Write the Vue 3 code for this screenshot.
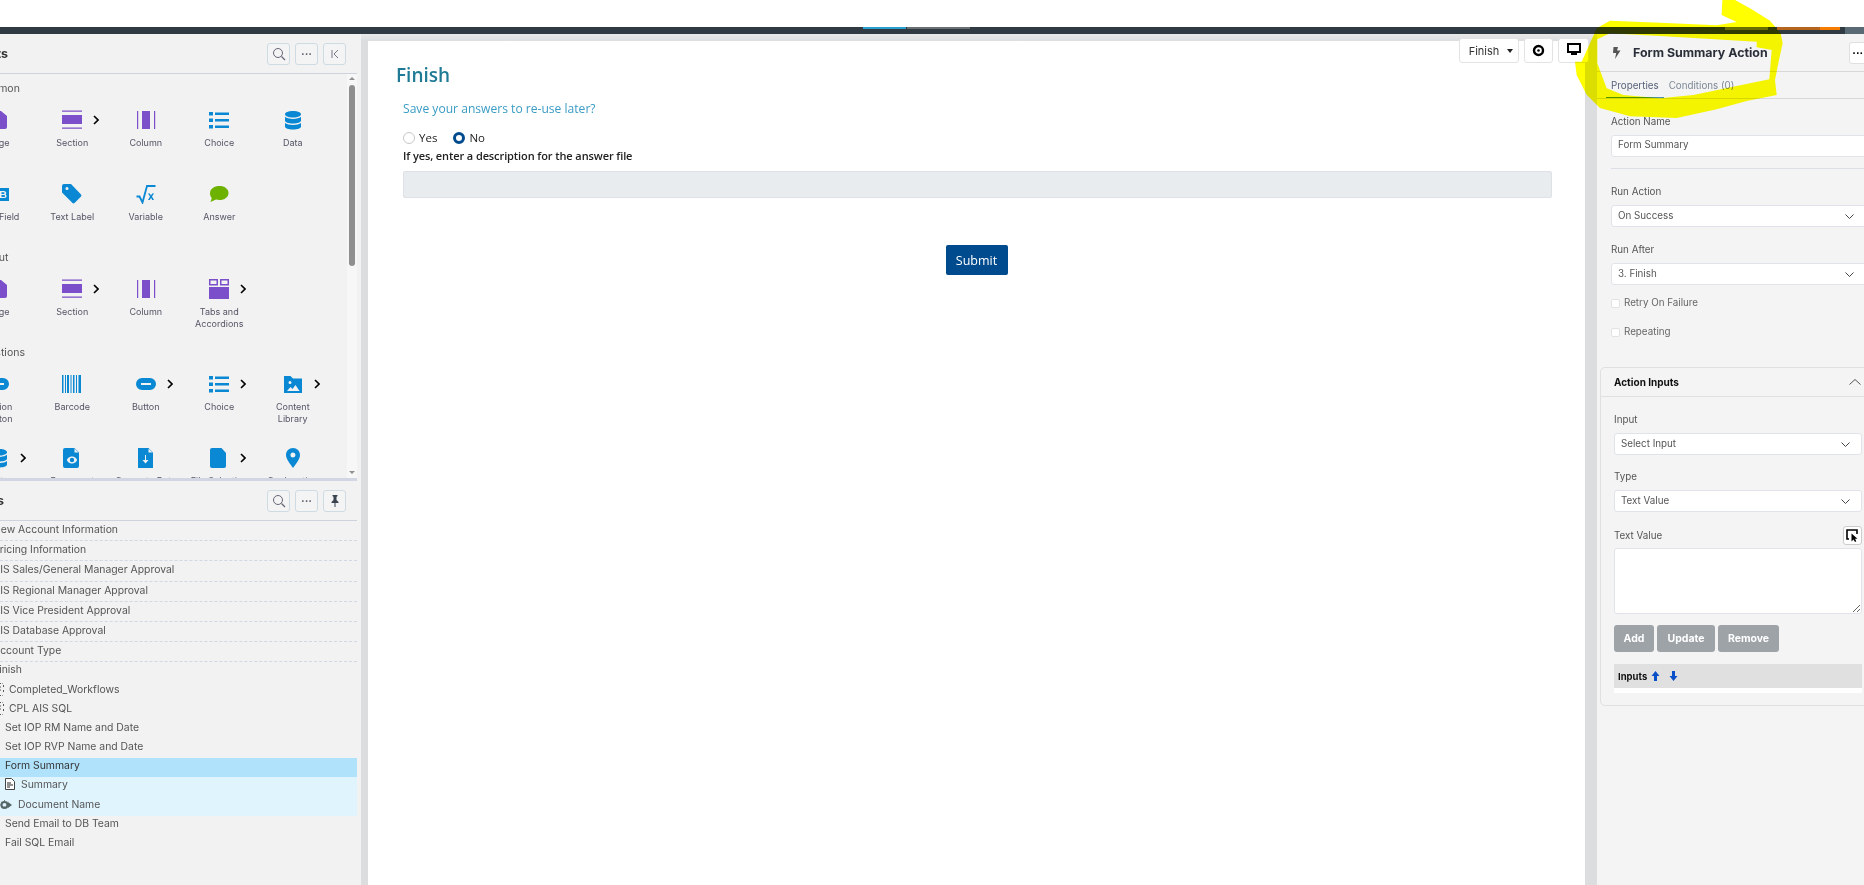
<template>
  <div class="page">
    <div class="top-white"></div>
    <div class="dark-bar">
      <span class="bar-tab bar-blue"></span>
      <span class="bar-tab bar-grey"></span>
      <span class="bar-tab bar-c"></span>
      <span class="bar-tab bar-orange"></span>
      <span class="bar-tab bar-hot"></span>
      <span class="bar-end"></span>
    </div>

    <div class="work">
      <aside class="left">
        <section class="palette">
          <header class="panel-head">
            <span class="panel-title top-title">Elements</span>
            <div class="head-btns">
              <button class="tool">
                <svg width="14" height="14" viewBox="0 0 14 14"><circle cx="6" cy="6" r="4.500" fill="none" stroke="#667" stroke-width="1"/><path d="M9.500 9.500 13 13" stroke="#667" stroke-width="1.200"/></svg>
              </button>
              <button class="tool dots">···</button>
              <button class="tool">
                <svg width="10" height="10" viewBox="0 0 10 10"><path d="M2 1v8M8 1 4 5l4 4" fill="none" stroke="#778" stroke-width="1"/></svg>
              </button>
            </div>
          </header>
          <div class="palette-body">
            <div class="palette-scroll">
              <div v-for="group in groups" :key="group.name" class="group">
                <div class="group-name">{{ group.name }}</div>
                <div class="grid">
                  <div v-for="item in group.items" :key="item.label" class="item">
                    <svg class="item-icon" viewBox="0 0 20 20" :class="item.color">
                      <path v-if="icons[item.icon].d" :d="icons[item.icon].d" fill-rule="evenodd" />
                      <path v-if="icons[item.icon].s" :d="icons[item.icon].s" class="line" />
                    </svg>
                    <svg v-if="item.more" class="more" width="6" height="10" viewBox="0 0 6 10"><path d="M1 1l4 4-4 4" fill="none" stroke="#000" stroke-width="1.600"/></svg>
                    <div class="item-label" :class="{ single: item.single }">{{ item.label }}</div>
                  </div>
                </div>
              </div>
            </div>
            <div class="scrollbar">
              <i class="arrow up"></i>
              <i class="thumb"></i>
              <i class="arrow down"></i>
            </div>
          </div>
        </section>

        <section class="tree-panel">
          <header class="panel-head">
            <span class="panel-title">Actions</span>
            <div class="head-btns">
              <button class="tool">
                <svg width="14" height="14" viewBox="0 0 14 14"><circle cx="6" cy="6" r="4.500" fill="none" stroke="#667" stroke-width="1"/><path d="M9.500 9.500 13 13" stroke="#667" stroke-width="1.200"/></svg>
              </button>
              <button class="tool dots">···</button>
              <button class="tool">
                <svg width="10" height="12" viewBox="0 0 10 12"><path d="M2.500 0h5v1l-1 1v3l2 2v1H5.500v4h-1V8H1.500V7l2-2V2l-1-1z" fill="#3a4350"/></svg>
              </button>
            </div>
          </header>
          <div class="tree">
            <div v-for="row in pages" :key="row.text" class="page-row" :class="{ tall: row.tall }">{{ row.text }}</div>
            <div class="page-last">Finish</div>
            <div v-for="row in actions" :key="row.text" class="act-row" :class="row.cls">
              <svg v-if="row.icon === 'sql'" width="8" height="13" viewBox="0 0 8 13"><path d="M0 .5h6.500M7.500 2v3M7.500 7v3M0 12.500h6.500M3 4h3M3 7h3" fill="none" stroke="#555" stroke-width="1" stroke-dasharray="2 1"/></svg>
              <svg v-if="row.icon === 'doc'" width="10" height="12" viewBox="0 0 10 12"><path d="M.5.5h6l3 3v8h-9z" fill="#fff" stroke="#444"/><path d="M2 5h4M2 7h6M2 9h3" stroke="#222"/></svg>
              <svg v-if="row.icon === 'gear'" class="gear" width="12" height="10" viewBox="0 0 12 10"><circle cx="4.500" cy="5" r="3" fill="none" stroke="#566" stroke-width="2"/><path d="M4.500 0v10M0 5h9M1.300 1.800l6.400 6.400M7.700 1.800 1.300 8.200" stroke="#566" stroke-width=".8" stroke-dasharray="1.300 5"/><path d="M8 2l4 3-4 3z" fill="#566"/></svg>
              <span>{{ row.text }}</span>
            </div>
          </div>
        </section>
      </aside>

      <main class="center">
        <div class="sheet">
          <h1>Finish</h1>
          <div class="form">
            <p class="question">Save your answers to re-use later?</p>
            <div class="radios">
              <label><i class="radio"></i>Yes</label>
              <label><i class="radio on"></i>No</label>
            </div>
            <div class="strong-label">If yes, enter a description for the answer file</div>
            <div class="disabled-input"></div>
            <div class="submit-row"><button class="submit">Submit</button></div>
          </div>
        </div>
        <div class="toolbar">
          <button class="pick">Finish<i class="caret"></i></button>
          <button class="tb-btn">
            <svg width="13" height="13" viewBox="0 0 13 13"><circle cx="6.500" cy="6.500" r="4.500" fill="none" stroke="#000" stroke-width="2.400"/><circle cx="6.500" cy="6.500" r="1.300" fill="#000"/></svg>
          </button>
          <button class="tb-btn wide">
            <svg width="14" height="13" viewBox="0 0 14 13"><path d="M1 1h12v8H1z" fill="#fff" stroke="#000" stroke-width="2"/><path d="M4 10h6v2H4z" fill="#000"/></svg>
          </button>
        </div>
      </main>

      <aside class="right">
        <header class="right-head">
          <svg width="9" height="12" viewBox="0 0 9 12"><path d="M1.500 0H6L5 3.500h3.500L3 12l1.200-6H1z" fill="#555"/></svg>
          <span class="right-title">Form Summary Action</span>
          <button class="right-more">···</button>
        </header>
        <nav class="tabs">
          <span class="tab active">Properties</span>
          <span class="tab">Conditions (0)</span>
        </nav>
        <div class="props">
          <div class="lbl">Action Name</div>
          <div class="inp mid">Form Summary</div>
          <div class="rule"></div>
          <div class="lbl">Run Action</div>
          <div class="inp sel">On Success<svg width="9" height="5" viewBox="0 0 9 5"><path d="M.5.500 4.500 4.500l4-4" fill="none" stroke="#444"/></svg></div>
          <div class="lbl">Run After</div>
          <div class="inp sel">3. Finish<svg width="9" height="5" viewBox="0 0 9 5"><path d="M.5.500 4.500 4.500l4-4" fill="none" stroke="#444"/></svg></div>
          <label class="check"><i></i>Retry On Failure</label>
          <label class="check second"><i></i>Repeating</label>

          <div class="card">
            <div class="card-head">
              <span>Action Inputs</span>
              <svg width="12" height="6" viewBox="0 0 12 6"><path d="M.5 5.500 6 .5l5.500 5" fill="none" stroke="#555"/></svg>
            </div>
            <div class="card-body">
              <div class="lbl">Input</div>
              <div class="inp sel in-card">Select Input<svg width="9" height="5" viewBox="0 0 9 5"><path d="M.5.500 4.500 4.500l4-4" fill="none" stroke="#444"/></svg></div>
              <div class="lbl">Type</div>
              <div class="inp sel in-card">Text Value<svg width="9" height="5" viewBox="0 0 9 5"><path d="M.5.500 4.500 4.500l4-4" fill="none" stroke="#444"/></svg></div>
              <div class="text-head">
                <span>Text Value</span>
                <button class="pointer-btn">
                  <svg width="13" height="13" viewBox="0 0 13 13"><path d="M3 10H1V1h10v4" fill="none" stroke="#000" stroke-width="1.600"/><path d="M5.500 4.500v8l2-2 1.500 2.500 1.300-.8-1.300-2.500h2.500z" fill="#000"/></svg>
                </button>
              </div>
              <div class="textarea">
                <svg class="grip" width="8" height="8" viewBox="0 0 8 8"><path d="M1 8l7-7M5 8l3-3" stroke="#666"/></svg>
              </div>
              <div class="btns">
                <button>Add</button>
                <button>Update</button>
                <button>Remove</button>
              </div>
              <div class="inputs-bar">
                <span>Inputs</span>
                <svg width="9" height="12" viewBox="0 0 9 12"><path d="M4.500 1 8.500 6H6v5H3V6H.5z" fill="#0a50c8"/></svg>
                <svg width="9" height="12" viewBox="0 0 9 12"><path d="M4.500 11 8.500 6H6V1H3v5H.5z" fill="#0a50c8"/></svg>
              </div>
              <div class="inputs-list"></div>
            </div>
          </div>
        </div>
      </aside>
    </div>

    <svg class="marker" width="304" height="120" viewBox="0 0 912 360">
      <path fill-rule="evenodd" d="M487 0H525L575 28 630 62 662 100 668 130 655 190 645 240 650 285 560 303 470 328 350 354 210 349 120 324 80 284 50 225 45 185H65L110 85 150 62 300 68 470 76 530 66 485 45ZM112 118 112 190 140 265 190 285 300 295 400 285 530 258 628 238 635 150 590 142 590 125 300 108 150 100Z" />
    </svg>
  </div>
</template>

<script setup>
const icons = {
  page: { d: 'M1 1h11l6 5v11a2 2 0 0 1-2 2H1z' },
  section: { d: 'M0 .5h20v1.200H0zM0 5h20v9H0zM0 17.500h20v1.200H0z' },
  column: { d: 'M1 1h1.200v18H1zM6 1h8v18H6zM18 1h1.200v18H18z' },
  tabs: { d: 'M0 0h9v6.500H0zM1.500 1.500v3.500h6V1.500zM11 0h9v6.500h-9zM12.500 1.500v3.500h6V1.500zM0 8h20v12H0z' },
  choice: { d: 'M0 2h4v3.500H0zM6 2.500h14V5H6zM0 8.500h4V12H0zM6 9h14v2.500H6zM0 15h4v3.500H0zM6 15.500h14V18H6z' },
  data: { d: 'M10 1c4.500 0 8 1.300 8 3.200S14.500 7.500 10 7.500 2 6.100 2 4.200 5.500 1 10 1zM2 6.800c1.500 1.300 4.500 2.100 8 2.100s6.500-.8 8-2.100v3.700c0 1.800-3.500 3-8 3s-8-1.200-8-3zM2 13c1.500 1.300 4.500 2 8 2s6.500-.7 8-2v3.500c0 1.800-3.500 3-8 3s-8-1.200-8-3z' },
  field: { d: 'M1 4h19v13H1zM11 7v7h4c2 0 2.500-1 2.500-2 0-.8-.4-1.400-1-1.600.5-.3.700-.8.700-1.400 0-1-.7-2-2.200-2zM12.500 8.200h2c.8 0 1.100.4 1.100.9s-.3.900-1.100.9h-2zM12.500 11h2.200c.9 0 1.300.4 1.300 1s-.4 1-1.300 1h-2.200z' },
  tag: { d: 'M2 0h7l10 10.500a1.500 1.500 0 0 1 0 2l-6.500 6.500a1.500 1.500 0 0 1-2 0L1 9.500C.3 9 0 8.500 0 7.500V2a2 2 0 0 1 2-2zM5 3a1.500 1.500 0 1 0 0 3 1.500 1.500 0 0 0 0-3z' },
  variable: { d: 'M12 9.500h1.800l1.200 2 1.200-2H18l-2 3 2 3.500h-1.800L15 13.800 13.800 16H12l2-3.500z', s: 'M.5 12.500h3l3 6L11 2h8.500' },
  answer: { d: 'M10.500 2c5 0 9 2.700 9 7s-4 7-9 7c-1.300 0-2.500-.2-3.500-.5L1.500 18l1.300-4C1.500 12.800 1 11 1 9c0-4.300 4.500-7 9.500-7z' },
  pill: { d: 'M6 4h8a6 6 0 0 1 0 12H6A6 6 0 0 1 6 4zM5 9v2h10V9z' },
  barcode: { d: 'M0 1h1.500v18H0zM3 1h1v18H3zM5 1h2v18H5zM8.500 1h1v18h-1zM11 1h1.500v18H11zM14 1h1v18h-1zM16.500 1H19v18h-2.500z' },
  library: { d: 'M1 2h6.500L10 4.500h9V19H1zM7 7a1.500 1.500 0 1 0 0 3 1.500 1.500 0 0 0 0-3zM4 17h12.500l-4-6-3 4-2-2z' },
  docEye: { d: 'M3 0h9l5 5v13a2 2 0 0 1-2 2H3a2 2 0 0 1-2-2V2a2 2 0 0 1 2-2zM10 8.500c-3 0-5 2.500-5 3.500s2 3.500 5 3.500 5-2.500 5-3.500-2-3.500-5-3.500zM10 9.800a2.200 2.200 0 1 1 0 4.400 2.200 2.200 0 0 1 0-4.400zM12.500 0v4.500H17z' },
  docDown: { d: 'M2 0h10l5 5v15H2zM9 7v5H6.500l3 3.500 3-3.500H10V7zM12.500 0v4.500H17z' },
  file: { d: 'M3 0h9.500l4.500 5v13a2 2 0 0 1-2 2H3a2 2 0 0 1-2-2V2a2 2 0 0 1 2-2z' },
  pin: { d: 'M10 0c4 0 7 3 7 7 0 4.500-5 10-7 13-2-3-7-8.500-7-13 0-4 3-7 7-7zM10 4.500a2.500 2.500 0 1 0 0 5 2.500 2.500 0 0 0 0-5z' }
}

const groups = [
  {
    name: 'Common',
    items: [
      { label: 'Page', icon: 'page', color: 'purple' },
      { label: 'Section', icon: 'section', color: 'purple', more: true },
      { label: 'Column', icon: 'column', color: 'purple' },
      { label: 'Choice', icon: 'choice', color: 'blue' },
      { label: 'Data', icon: 'data', color: 'blue' },
      { label: 'Text Field', icon: 'field', color: 'blue' },
      { label: 'Text Label', icon: 'tag', color: 'blue' },
      { label: 'Variable', icon: 'variable', color: 'blue' },
      { label: 'Answer', icon: 'answer', color: 'green' }
    ]
  },
  {
    name: 'Layout',
    items: [
      { label: 'Page', icon: 'page', color: 'purple' },
      { label: 'Section', icon: 'section', color: 'purple', more: true },
      { label: 'Column', icon: 'column', color: 'purple' },
      { label: 'Tabs and Accordions', icon: 'tabs', color: 'purple', more: true }
    ]
  },
  {
    name: 'Questions',
    items: [
      { label: 'Action Button', icon: 'pill', color: 'blue' },
      { label: 'Barcode', icon: 'barcode', color: 'blue' },
      { label: 'Button', icon: 'pill', color: 'blue', more: true },
      { label: 'Choice', icon: 'choice', color: 'blue', more: true },
      { label: 'Content Library', icon: 'library', color: 'blue', more: true },
      { label: 'Data', icon: 'data', color: 'blue', more: true },
      { label: 'Document', icon: 'docEye', color: 'blue', single: true },
      { label: 'Generate Data', icon: 'docDown', color: 'blue', single: true },
      { label: 'File Selection', icon: 'file', color: 'blue', more: true, single: true },
      { label: 'Geolocation', icon: 'pin', color: 'blue', single: true }
    ]
  }
]

const pages = [
  { text: 'New Account Information' },
  { text: 'Pricing Information' },
  { text: 'AIS Sales/General Manager Approval', tall: true },
  { text: 'AIS Regional Manager Approval' },
  { text: 'AIS Vice President Approval' },
  { text: 'AIS Database Approval' },
  { text: 'Account Type' }
]

const actions = [
  { text: 'Completed_Workflows', icon: 'sql', cls: 'with-sql' },
  { text: 'CPL AIS SQL', icon: 'sql', cls: 'with-sql' },
  { text: 'Set IOP RM Name and Date' },
  { text: 'Set IOP RVP Name and Date' },
  { text: 'Form Summary', cls: 'selected' },
  { text: 'Summary', icon: 'doc', cls: 'child' },
  { text: 'Document Name', icon: 'gear', cls: 'child gear-row' },
  { text: 'Send Email to DB Team' },
  { text: 'Fail SQL Email' }
]
</script>

<style>
html,
body {
  margin: 0;
  background: #fff;
}
</style>

<style scoped>
.page {
  position: relative;
  width: 1864px;
  height: 885px;
  overflow: hidden;
  font-family: Inter, "Noto Sans", sans-serif;
  font-size: 10.5px;
  color: #444;
  background: #fff;
}

.top-white {
  height: 27px;
}

.dark-bar {
  display: flex;
  align-items: flex-start;
  height: 7px;
  background: #2f3a42;
}

.bar-tab {
  display: block;
  height: 2px;
}

.bar-blue {
  width: 43px;
  margin-left: 863px;
  background: #2a9fd0;
}

.bar-grey {
  width: 63px;
  margin-left: 1px;
  background: #6a6f72;
}

.bar-c {
  width: 43px;
  height: 3px;
  margin-left: 755px;
  background: #6a6f72;
}

.bar-orange {
  width: 43px;
  height: 3px;
  margin-left: 9px;
  background: #b5651d;
}

.bar-hot {
  width: 20px;
  height: 3px;
  background: #f57c00;
}

.bar-end {
  width: 19px;
  height: 7px;
  margin-left: 5px;
  background: #5a6a75;
}

.work {
  display: flex;
  height: 851px;
}

/* left column */
.left {
  flex: 0 0 361px;
  width: 361px;
  background: #f2f2f2;
  overflow: hidden;
}

.palette,
.tree-panel {
  width: 357px;
}

.panel-head {
  display: flex;
  align-items: center;
  justify-content: space-between;
  box-sizing: border-box;
  height: 40px;
  padding-right: 11px;
  border-bottom: 1px solid #ccd3dc;
}

.panel-title {
  display: block;
  width: 58px;
  margin-left: -54px;
  font-size: 12.500px;
  font-weight: 700;
  color: #333;
  text-align: right;
}

.top-title {
  margin-left: -50px;
}

.head-btns {
  display: flex;
  gap: 5px;
}

.tool {
  display: flex;
  align-items: center;
  justify-content: center;
  box-sizing: border-box;
  width: 23px;
  height: 22px;
  padding: 0;
  border: 1px solid #cfdbe3;
  border-radius: 3px;
  background: #f4f4f4;
  color: #556;
  font-size: 11px;
  font-weight: 700;
  font-family: inherit;
}

.palette-body {
  display: flex;
  height: 404px;
  border-bottom: 3px solid #d2d6e2;
}

.palette-scroll {
  flex: 1;
  padding-top: 6px;
  overflow: hidden;
}

.group {
  margin-bottom: 1px;
}

.group-name {
  margin-left: -25px;
  font-size: 10.500px;
  line-height: 18px;
  color: #555;
}

.grid {
  display: grid;
  grid-template-columns: repeat(5, 73.5px);
  grid-auto-rows: 64px;
  row-gap: 10px;
  margin-top: 12px;
  margin-left: -38px;
}

.item {
  position: relative;
  text-align: center;
}

.item-icon {
  display: block;
  width: 20px;
  height: 20px;
  margin: 0 auto;
}

.purple {
  fill: #7a4fc9;
  --c: #7a4fc9;
}

.blue {
  fill: #0a88d4;
  --c: #0a88d4;
}

.green {
  fill: #6db200;
  --c: #6db200;
}

.line {
  fill: none;
  stroke: var(--c);
  stroke-width: 1.800;
}

.more {
  position: absolute;
  top: 5px;
  left: calc(50% + 21px);
}

.item-label {
  width: 52px;
  margin: 7px auto 0;
  font-size: 9px;
  line-height: 12px;
  color: #556;
}

.item-label.single {
  width: 73px;
  white-space: nowrap;
}

.scrollbar {
  display: flex;
  flex: 0 0 10px;
  flex-direction: column;
  align-items: center;
  padding-top: 3px;
  background: #f7f7f7;
}

.thumb {
  display: block;
  width: 6px;
  height: 181px;
  margin-top: 5px;
  border-radius: 3px;
  background: #8f8f8f;
}

.arrow {
  display: block;
  width: 0;
  height: 0;
  border-left: 3px solid transparent;
  border-right: 3px solid transparent;
}

.arrow.up {
  border-bottom: 3px solid #8f8f8f;
}

.arrow.down {
  margin-top: auto;
  margin-bottom: 4px;
  border-top: 3px solid #8f8f8f;
}

.tree {
  width: 367px;
  margin-left: -10px;
  font-size: 10.400px;
  color: #555;
}

.page-row {
  box-sizing: border-box;
  height: 20px;
  padding-left: 3px;
  line-height: 17px;
  border-bottom: 1px dashed #cfd8e3;
}

.page-row.tall {
  height: 21px;
}

.page-last {
  padding-left: 3px;
  height: 19px;
  line-height: 13px;
  margin-top: 1px;
}

.act-row {
  display: flex;
  align-items: flex-start;
  gap: 6px;
  height: 19px;
  padding-left: 15px;
  line-height: 15px;
}

.act-row svg {
  flex: none;
  margin-top: 1px;
}

.act-row .gear {
  margin-top: 4px;
}

.with-sql {
  gap: 5px;
  padding-left: 6px;
}

.selected {
  background: #b1e2fb;
  color: #333;
}

.child {
  background: #e0f4fe;
}

.gear-row {
  height: 20px;
  padding-left: 10px;
  line-height: 17px;
}

/* middle */
.center {
  position: relative;
  flex: 0 0 1236px;
  box-sizing: border-box;
  width: 1236px;
  padding: 7px 12px 0 7px;
  background: linear-gradient(#e9e9e9, #dcdddf 7px);
  background-color: #dfe0e2;
}

.sheet {
  box-sizing: border-box;
  height: 100%;
  padding: 22px 33px 0 28px;
  background: #fff;
  font-family: "Open Sans", "Noto Sans", sans-serif;
  color: #222;
}

h1 {
  margin: 0;
  font-size: 19px;
  font-weight: 600;
  line-height: 24px;
  color: #1f7a96;
}

.form {
  padding-left: 7px;
}

.question {
  margin: 13px 0 0;
  font-size: 12.100px;
  line-height: 18px;
  color: #3a9cc4;
}

.radios {
  display: flex;
  gap: 16px;
  margin-top: 12px;
  font-size: 11.500px;
  line-height: 16px;
}

.radios label {
  display: flex;
  align-items: center;
  gap: 4px;
}

.radio {
  display: block;
  box-sizing: border-box;
  width: 12px;
  height: 12px;
  border: 1px solid #c8c8c8;
  border-radius: 50%;
  background: #fff;
}

.radio.on {
  border: 3.500px solid #004b8d;
}

.strong-label {
  margin-top: 2px;
  font-size: 11px;
  font-weight: 600;
  letter-spacing: -0.1px;
  line-height: 16px;
}

.disabled-input {
  box-sizing: border-box;
  height: 27px;
  margin-top: 7px;
  border: 1px solid #dee2e6;
  border-radius: 2px;
  background: #e9ecef;
}

.submit-row {
  display: flex;
  justify-content: center;
  margin-top: 47px;
}

.submit {
  width: 62px;
  height: 30px;
  margin-right: 2px;
  padding: 0;
  border: 0;
  border-radius: 2px;
  background: #004b8d;
  color: #fff;
  font-family: inherit;
  font-size: 12.500px;
}

.toolbar {
  position: absolute;
  top: 4px;
  left: 1098px;
  display: flex;
  gap: 5px;
}

.toolbar button {
  display: flex;
  align-items: center;
  justify-content: center;
  box-sizing: border-box;
  height: 25px;
  padding: 0;
  border: 1px solid #e3e3e3;
  border-radius: 3px;
  background: #fff;
  font-family: Inter, sans-serif;
}

.toolbar .pick {
  width: 60px;
  padding-left: 4px;
  gap: 8px;
  font-size: 11px;
  color: #333;
}

.caret {
  display: block;
  border-left: 3px solid transparent;
  border-right: 3px solid transparent;
  border-top: 4px solid #222;
}

.tb-btn {
  width: 29px;
}

.toolbar .tb-btn.wide {
  width: 31px;
  padding-bottom: 3px;
}

/* right panel */
.right {
  flex: 1;
  min-width: 0;
  background: #f4f4f4;
  overflow: hidden;
}

.right-head {
  display: flex;
  align-items: center;
  box-sizing: border-box;
  height: 38px;
  padding-left: 15px;
  border-bottom: 1px solid #d8d8d8;
}

.right-title {
  margin-left: 12px;
  font-size: 12.400px;
  font-weight: 700;
  color: #2a2f3a;
}

.right-more {
  width: 30px;
  height: 22px;
  flex: none;
  margin-left: auto;
  margin-right: -15px;
  padding: 0 12px 0 0;
  border: 1px solid #e0e0e0;
  border-radius: 3px;
  background: #fff;
  font-size: 11px;
  font-weight: 700;
}

.tabs {
  display: flex;
  box-sizing: border-box;
  height: 27px;
  padding-left: 9px;
  border-bottom: 1px solid #d8d8d8;
}

.tab {
  box-sizing: border-box;
  height: 26px;
  padding: 8px 5px 0;
  font-size: 9.800px;
  color: #7c8796;
}

.tab.active {
  color: #56617a;
  border-bottom: 1px solid #4f93a8;
}

.props {
  width: 263px;
  padding: 16px 0 0 14px;
  font-size: 9.800px;
}

.lbl {
  font-size: 9.800px;
  line-height: 14px;
  color: #555;
}

.inp {
  box-sizing: border-box;
  height: 22px;
  margin-top: 6px;
  padding: 0 0 2px 6px;
  border: 1px solid #e0e4ea;
  border-radius: 3px;
  background: #fff;
  line-height: 18px;
  color: #555;
}

.mid {
  margin-top: 6px;
}

.sel {
  display: flex;
  align-items: center;
  justify-content: space-between;
  margin-bottom: 16px;
  padding-bottom: 0;
  padding-right: 19px;
}

.rule {
  height: 1px;
  margin: 11px 0 16px;
  background: #dcdfe6;
}

.check {
  display: flex;
  align-items: center;
  gap: 4px;
  height: 14px;
  margin-top: -5px;
  line-height: 14px;
  color: #666;
}

.check.second {
  margin-top: 15px;
}

.check i {
  display: block;
  box-sizing: border-box;
  width: 9px;
  height: 9px;
  border: 1px solid #e2e2e2;
  border-radius: 2px;
  background: #fff;
}

.card {
  box-sizing: border-box;
  width: 276px;
  height: 339px;
  margin: 28px 0 0 -11px;
  border: 1px solid #e0e0e0;
  border-radius: 5px;
}

.card-head {
  display: flex;
  align-items: center;
  justify-content: space-between;
  box-sizing: border-box;
  height: 29px;
  padding: 0 14px 0 13px;
  border-bottom: 1px solid #e0e0e0;
  font-size: 10px;
  font-weight: 700;
  color: #111;
}

.card-body {
  width: 248px;
  padding: 16px 0 0 13px;
}

.in-card {
  margin-bottom: 15px;
  padding-right: 11px;
}

.text-head {
  display: flex;
  align-items: center;
  justify-content: space-between;
  height: 19px;
  margin-top: -1px;
  color: #555;
}

.pointer-btn {
  display: flex;
  align-items: center;
  justify-content: center;
  box-sizing: border-box;
  width: 19px;
  height: 19px;
  padding: 0;
  border: 1px solid #ccc;
  border-radius: 3px;
  background: #fff;
}

.textarea {
  position: relative;
  box-sizing: border-box;
  height: 66px;
  margin-top: 3px;
  border: 1px solid #e0e4ea;
  border-radius: 3px;
  background: #fff;
}

.grip {
  position: absolute;
  right: 1px;
  bottom: 1px;
}

.btns {
  display: flex;
  gap: 3px;
  margin-top: 11px;
}

.btns button {
  height: 27px;
  padding: 0;
  border: 0;
  border-radius: 3px;
  background: #9ea3a8;
  color: #fff;
  font-family: inherit;
  font-size: 10.500px;
  font-weight: 700;
}

.btns button:nth-child(1) {
  width: 40px;
}

.btns button:nth-child(2) {
  width: 58px;
}

.btns button:nth-child(3) {
  width: 61px;
}

.inputs-bar {
  display: flex;
  align-items: center;
  gap: 9px;
  height: 24px;
  margin-top: 12px;
  padding-left: 4px;
  background: #e0e0e0;
  font-size: 9.500px;
  font-weight: 700;
  color: #111;
}

.inputs-bar span {
  margin-right: -5px;
}

.inputs-list {
  height: 5px;
  background: #fff;
}

/* highlighter scribble over the header */
.marker {
  position: absolute;
  top: 0;
  left: 1560px;
  fill: #ffff00;
  mix-blend-mode: multiply;
  pointer-events: none;
}
</style>
